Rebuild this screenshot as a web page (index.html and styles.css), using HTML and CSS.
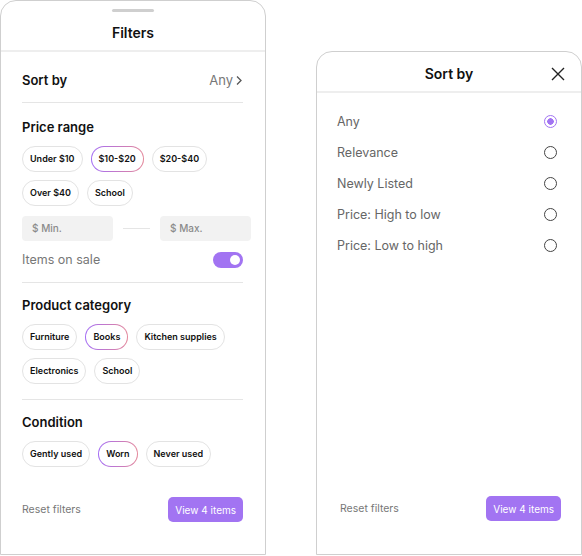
FILE: index.html
```html
<!DOCTYPE html>
<html lang="en">
<head>
    <meta charset="UTF-8">
    <title>Filters</title>
    <link rel="stylesheet" href="styles.css">
</head>
<body>
    <div class="screens">
        <div class="panel filters">
            <div class="filters-head">
                <div class="handle"></div>
                <h1>Filters</h1>
            </div>
            <div class="body">
                <div class="sort-row">
                    <span class="label">Sort by</span>
                    <span class="value">Any
                        <svg width="8" height="11" viewBox="0 0 8 11"><path d="M2 1.5l4 4-4 4" fill="none" stroke="#555" stroke-width="1.3"/></svg>
                    </span>
                </div>
                <div class="section price">
                    <h2>Price range</h2>
                    <div class="chips">
                        <span class="chip">Under $10</span>
                        <span class="chip active">$10-$20</span>
                        <span class="chip">$20-$40</span>
                        <span class="chip">Over $40</span>
                        <span class="chip">School</span>
                    </div>
                    <div class="range">
                        <div class="field">$ Min.</div>
                        <div class="dash"></div>
                        <div class="field wide">$ Max.</div>
                    </div>
                    <div class="sale">
                        <span>Items on sale</span>
                        <span class="toggle"><span class="knob"></span></span>
                    </div>
                </div>
                <div class="section">
                    <h2>Product category</h2>
                    <div class="chips">
                        <span class="chip">Furniture</span>
                        <span class="chip active">Books</span>
                        <span class="chip">Kitchen supplies</span>
                        <span class="chip">Electronics</span>
                        <span class="chip">School</span>
                    </div>
                </div>
                <div class="section last">
                    <h2>Condition</h2>
                    <div class="chips">
                        <span class="chip">Gently used</span>
                        <span class="chip active">Worn</span>
                        <span class="chip">Never used</span>
                    </div>
                </div>
                <div class="footer">
                    <span class="reset">Reset filters</span>
                    <button class="view">View 4 items</button>
                </div>
            </div>
        </div>

        <div class="panel sort">
            <div class="sort-head">
                <h1>Sort by</h1>
                <svg class="close" width="14" height="14" viewBox="0 0 14 14"><path d="M1 1l12 12M13 1L1 13" stroke="#222" stroke-width="1.4"/></svg>
            </div>
            <ul class="options">
                <li>Any <span class="radio on"></span></li>
                <li>Relevance <span class="radio"></span></li>
                <li>Newly Listed <span class="radio"></span></li>
                <li>Price: High to low <span class="radio"></span></li>
                <li>Price: Low to high <span class="radio"></span></li>
            </ul>
            <div class="footer sort-foot">
                <span class="reset">Reset filters</span>
                <button class="view">View 4 items</button>
            </div>
        </div>
    </div>
</body>
</html>
```

FILE: styles.css
```css
body {
    margin: 0;
    font-family: Inter, "Noto Sans", sans-serif;
    background: #fff;
    color: #111;
}
.screens {
    display: flex;
    justify-content: space-between;
    height: 555px;
}
.panel {
    box-sizing: border-box;
    border: 1px solid #cfcfcf;
    border-radius: 16px 16px 0 0;
    background: #fff;
}
.filters {
    width: 266px;
    height: 555px;
}
.filters-head {
    height: 51px;
    border-bottom: 2px solid #eee;
    box-sizing: border-box;
    text-align: center;
    padding-top: 8px;
}
.handle {
    width: 42px;
    height: 3px;
    border-radius: 2px;
    background: #cfcfcf;
    margin: 0 auto;
}
h1 {
    margin: 11px 0 0;
    font-size: 14px;
    line-height: 20px;
    font-weight: 600;
}
.body {
    padding: 0 22px 0 21px;
}
.sort-row {
    display: flex;
    justify-content: space-between;
    align-items: center;
    padding: 19px 0 13px;
    border-bottom: 1px solid #e5e5e5;
    line-height: 18px;
}
.label {
    font-size: 13px;
    font-weight: 600;
}
.value {
    color: #777;
    font-size: 13px;
    display: flex;
    align-items: center;
    gap: 2px;
}
.section {
    padding: 13px 0 15px;
    border-bottom: 1px solid #e5e5e5;
}
.section.price {
    padding: 15px 0 13px;
}
.section.last {
    border-bottom: none;
}
h2 {
    margin: 0;
    font-size: 13px;
    line-height: 18px;
    font-weight: 600;
}
.chips {
    display: flex;
    flex-wrap: wrap;
    gap: 8px 8px;
    margin-top: 10px;
}
.chip {
    box-sizing: border-box;
    height: 26px;
    line-height: 24px;
    padding: 0 7px;
    border: 1px solid #e3e3e3;
    border-radius: 13px;
    font-size: 9px;
    font-weight: 600;
    background: #fff;
}
.chip.active {
    border: 1.5px solid transparent;
    line-height: 23px;
    background: linear-gradient(#fff, #fff) padding-box,
                linear-gradient(90deg, #a36cf5, #e4879a) border-box;
}
.range {
    display: flex;
    align-items: center;
    margin-top: 10px;
    width: 229px;
}
.field {
    width: 91px;
    height: 25px;
    line-height: 25px;
    border-radius: 4px;
    background: #f2f2f2;
    color: #8a8a8a;
    font-size: 10px;
    font-weight: 500;
    padding-left: 10px;
    box-sizing: border-box;
}
.dash {
    flex: 1;
    height: 1px;
    background: #e5e5e5;
    margin: 0 10px;
}
.sale {
    display: flex;
    justify-content: space-between;
    align-items: center;
    margin-top: 10px;
    font-size: 12.5px;
    color: #777;
    line-height: 18px;
}
.toggle {
    width: 30px;
    height: 16px;
    border-radius: 8px;
    background: #a274f2;
    display: flex;
    justify-content: flex-end;
    align-items: center;
    padding: 0 3px;
    box-sizing: border-box;
}
.knob {
    width: 10px;
    height: 10px;
    border-radius: 50%;
    background: #fff;
}
.footer {
    display: flex;
    justify-content: space-between;
    align-items: center;
    margin-top: 15px;
}
.reset {
    color: #777;
    font-size: 10.5px;
}
.view {
    border: none;
    border-radius: 5px;
    background: #a274f2;
    color: #fff;
    font-family: inherit;
    font-size: 10px;
    height: 25px;
    padding: 0 7px;
}
.sort {
    width: 266px;
    height: 504px;
    margin-top: 51px;
    display: flex;
    flex-direction: column;
}
.sort-head {
    position: relative;
    height: 41px;
    border-bottom: 2px solid #eee;
    text-align: center;
    box-sizing: border-box;
}
.sort-head h1 {
    margin-top: 12px;
}
.close {
    position: absolute;
    right: 16px;
    top: 15px;
}
.options {
    list-style: none;
    margin: 0;
    padding: 13px 24px 0 20px;
}
.options li {
    display: flex;
    justify-content: space-between;
    align-items: center;
    height: 31px;
    font-size: 12.5px;
    color: #666;
}
.radio {
    box-sizing: border-box;
    width: 13px;
    height: 13px;
    border-radius: 50%;
    border: 1.3px solid #444;
}
.radio.on {
    border-color: #a274f2;
    background: radial-gradient(circle, #a274f2 3px, #fff 3.5px);
}
.sort-foot {
    margin-top: auto;
    padding: 0 20px 33px 23px;
}
```
